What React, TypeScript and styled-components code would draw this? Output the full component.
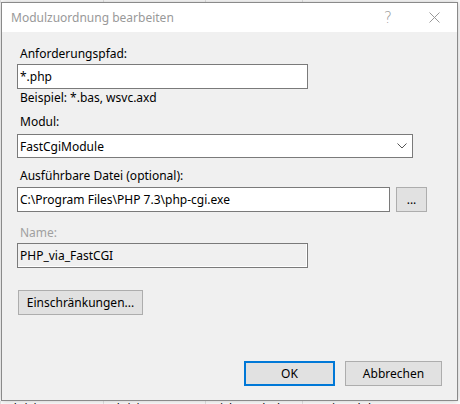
import styled, { createGlobalStyle } from "styled-components";

const GlobalStyle = createGlobalStyle`
  html, body {
    margin: 0;
    padding: 0;
    background: #ffffff;
  }
  body {
    font-family: "Noto Sans", "Liberation Sans", sans-serif;
    font-size: 12px;
    color: #000000;
  }
`;

const Desktop = styled.div`
  position: relative;
  width: 460px;
  height: 404px;
  overflow: hidden;
  background: #ffffff;
`;

// the list view behind the dialog, only its edges peek out
const BackList = styled.div`
  display: flex;
  flex-direction: column;
  justify-content: space-between;
  height: 100%;
`;

type BackRowProps = { $edge: "top" | "bottom" };

const BackRow = styled.div<BackRowProps>`
  display: grid;
  grid-template-columns: 103px 102px 97px 1fr;
  height: 3px;
  overflow: hidden;
  align-items: ${(p) => (p.$edge === "top" ? "end" : "start")};
`;

const BackCell = styled.div`
  height: 16px;
  line-height: 16px;
  padding-left: 5px;
  border-left: 1px solid #e5e5e5;
  white-space: nowrap;
  overflow: hidden;
  font-size: 12px;
`;

const Dialog = styled.div`
  position: absolute;
  left: 1px;
  top: 2px;
  width: 455px;
  height: 397px;
  display: flex;
  flex-direction: column;
  background: #f0f0f0;
  border: 1px solid #8a8a8a;
  box-shadow: 0 0 6px rgba(0, 0, 0, 0.25);
`;

const TitleBar = styled.div`
  display: flex;
  align-items: center;
  height: 29px;
  background: #ffffff;
  padding-left: 9px;
`;

const Title = styled.div`
  flex: 1;
  color: #999999;
  font-size: 12px;
`;

const HelpGlyph = styled.div`
  width: 46px;
  text-align: center;
  color: #999999;
  font-size: 15px;
  font-family: "DejaVu Sans", sans-serif;
  font-weight: 300;
  margin-right: 0;
`;

const CloseBox = styled.div`
  display: flex;
  align-items: center;
  justify-content: center;
  width: 46px;
  margin-right: 0;
`;

const Body = styled.div`
  flex: 1;
  display: flex;
  flex-direction: column;
  align-items: flex-start;
  padding: 14px 15px 14px 15px;
`;

type LabelProps = { $gap: number; $disabled?: boolean };

const Label = styled.div<LabelProps>`
  margin-top: ${(p) => p.$gap}px;
  margin-left: 3px;
  line-height: 16px;
  color: ${(p) => (p.$disabled ? "#a0a0a0" : "#000000")};
`;

type BoxProps = { $width: number; $gap: number; $height?: number };

const TextBox = styled.div<BoxProps>`
  box-sizing: border-box;
  display: flex;
  align-items: center;
  width: ${(p) => p.$width}px;
  height: ${(p) => p.$height ?? 25}px;
  margin-top: ${(p) => p.$gap}px;
  padding: 0 2px;
  background: #ffffff;
  border: 1px solid #7a7a7a;
  white-space: nowrap;
`;

const ReadOnlyBox = styled(TextBox)`
  background: #f0f0f0;
  box-shadow: inset -1px -1px 0 #ffffff;
`;

const SelectBox = styled(TextBox)`
  justify-content: space-between;
  padding-right: 5px;
`;

const Row = styled.div<{ $gap: number }>`
  display: flex;
  gap: 6px;
  margin-top: ${(p) => p.$gap}px;
`;

type ButtonProps = { $width: number; $default?: boolean };

const Button = styled.button<ButtonProps>`
  box-sizing: border-box;
  width: ${(p) => p.$width}px;
  height: 25px;
  padding: 0;
  background: #e1e1e1;
  border: ${(p) => (p.$default ? "2px solid #0078d7" : "1px solid #adadad")};
  font-family: "Noto Sans", "Liberation Sans", sans-serif;
  font-size: 12px;
  color: #000000;
`;

const SideButton = styled(Button)`
  margin-left: 1px;
  margin-top: 22px;
`;

const Footer = styled.div`
  margin-top: auto;
  align-self: flex-end;
  display: flex;
  gap: 10px;
`;

function App() {
  return (
    <>
      <GlobalStyle />
      <Desktop>
        <BackList>
          <BackRow $edge="top">
            <BackCell>Aktiviert</BackCell>
            <BackCell>Benutzer</BackCell>
            <BackCell>Nicht änderbar</BackCell>
            <BackCell>System.Web.Diagnostics.Tr</BackCell>
          </BackRow>
          <BackRow $edge="bottom">
            <BackCell>Aktiviert</BackCell>
            <BackCell>Aktiviert</BackCell>
            <BackCell>Nicht änderbar</BackCell>
            <BackCell>IsapiModule</BackCell>
          </BackRow>
        </BackList>

        <Dialog>
          <TitleBar>
            <Title>Modulzuordnung bearbeiten</Title>
            <HelpGlyph>?</HelpGlyph>
            <CloseBox>
              <svg width="11" height="11" viewBox="0 0 11 11">
                <path d="M0.5 0.5 L10.5 10.5 M10.5 0.5 L0.5 10.5" stroke="#999999" strokeWidth="1" />
              </svg>
            </CloseBox>
          </TitleBar>

          <Body>
            <Label $gap={0}>Anforderungspfad:</Label>
            <TextBox $width={291} $gap={2}>*.php</TextBox>
            <Label $gap={1}>Beispiel: *.bas, wsvc.axd</Label>

            <Label $gap={8}>Modul:</Label>
            <SelectBox $width={396} $gap={4} $height={24}>
              <span>FastCgiModule</span>
              <svg width="10" height="6" viewBox="0 0 10 6">
                <path d="M0.5 0.5 L5 5 L9.5 0.5" stroke="#555555" strokeWidth="1" fill="none" />
              </svg>
            </SelectBox>

            <Label $gap={10}>Ausführbare Datei (optional):</Label>
            <Row $gap={3}>
              <TextBox $width={373} $gap={0}>C:\Program Files\PHP 7.3\php-cgi.exe</TextBox>
              <Button $width={31}>...</Button>
            </Row>

            <Label $gap={13} $disabled>Name:</Label>
            <ReadOnlyBox $width={291} $gap={2}>PHP_via_FastCGI</ReadOnlyBox>

            <SideButton $width={125}>Einschränkungen...</SideButton>

            <Footer>
              <Button $width={91} $default>OK</Button>
              <Button $width={97}>Abbrechen</Button>
            </Footer>
          </Body>
        </Dialog>
      </Desktop>
    </>
  );
}

export default App;
